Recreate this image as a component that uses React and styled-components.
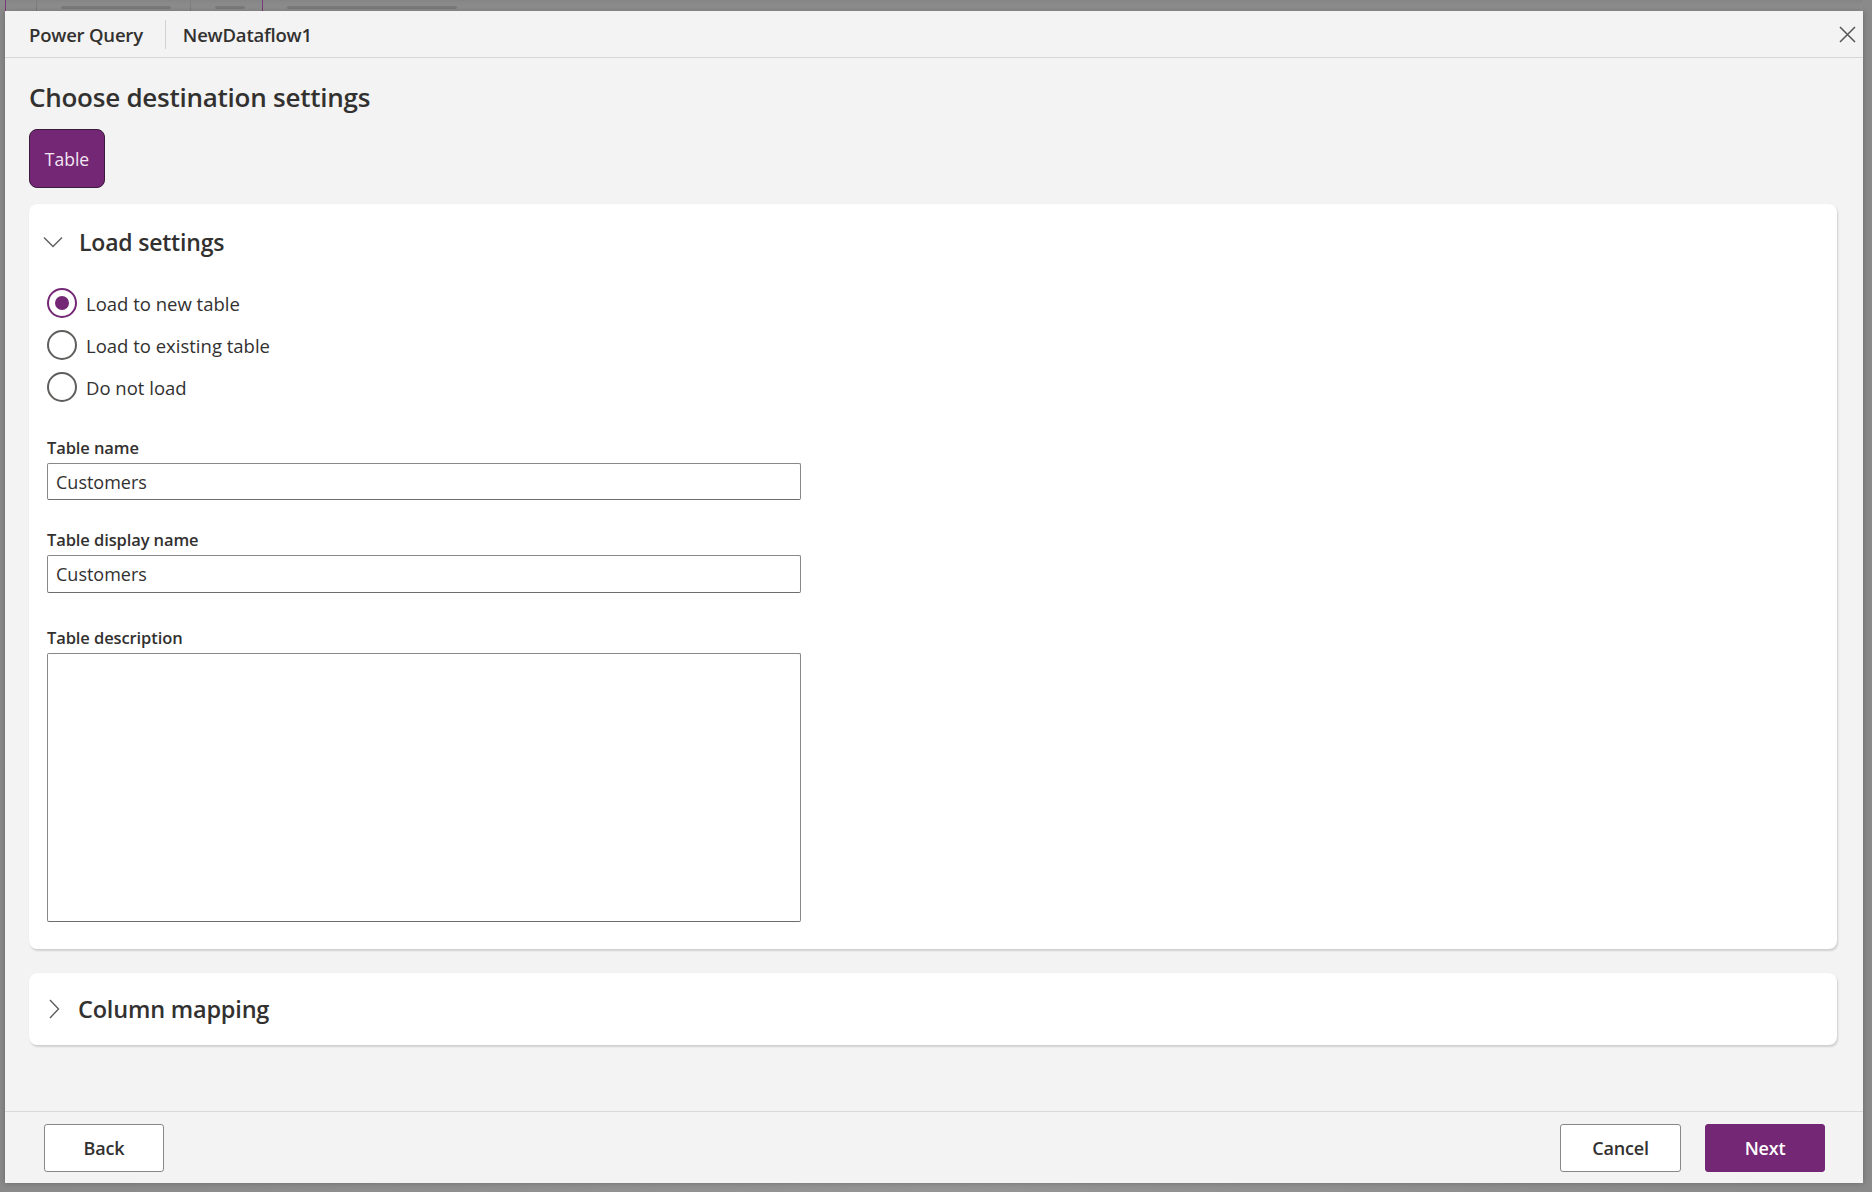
import React from "react";
import styled, {createGlobalStyle, css} from "styled-components";

const GlobalStyle = createGlobalStyle`
    html, body {
        margin: 0;
        padding: 0;
        background: #8e8e8e;
    }
    * {
        box-sizing: border-box;
    }
`;

const PURPLE = "#742774";
const TEXT = "#323130";
const FONT = `"Open Sans", "Noto Sans", "Liberation Sans", sans-serif`;

const Page = styled.div`
    width: 1872px;
    height: 1192px;
    display: flex;
    flex-direction: column;
    padding: 0 9px 9px 5px;
    font-family: ${FONT};
    color: ${TEXT};
    background: linear-gradient(to right, #8a8a8a, #959595 50%, #8a8a8a);
    overflow: hidden;
`;

// edge of the app tab strip that peeks out above the dialog
const BackdropTabs = styled.div`
    height: 11px;
    display: flex;
    flex-shrink: 0;
    background: linear-gradient(#858585, #939393);
`;

const BackdropTab = styled.div`
    width: ${props => props.width}px;
    border-left: 1px solid ${props => props.accent ? "#7b3b7b" : "#7e7e7e"};
    display: flex;
    align-items: flex-end;
    padding: 0 0 2px 24px;
`;

const BackdropSmudge = styled.div`
    width: ${props => props.width}px;
    height: 3px;
    border-radius: 2px;
    background: rgba(90, 90, 90, 0.35);
`;

const Dialog = styled.div`
    flex: 1;
    display: flex;
    flex-direction: column;
    background: #f3f3f3;
    box-shadow: 0 0 6px rgba(0, 0, 0, 0.25);
`;

const Header = styled.div`
    height: 47px;
    display: flex;
    align-items: center;
    padding: 0 4px 0 24px;
    border-bottom: 1px solid #d6d6d6;
    flex-shrink: 0;
`;

const HeaderTitle = styled.div`
    font-size: 18.5px;
    font-weight: 600;
    letter-spacing: -0.2px;
    color: ${TEXT};
`;

const HeaderDivider = styled.div`
    width: 1px;
    height: 29px;
    background: #d2d2d2;
    margin: 0 17px 0 22px;
`;

const CloseButton = styled.button`
    margin-left: auto;
    width: 24px;
    height: 24px;
    border: 0;
    background: none;
    padding: 0;
    display: flex;
    align-items: center;
    justify-content: center;
    color: #555;
`;

const Body = styled.div`
    flex: 1;
    padding: 0 26px 0 24px;
    display: flex;
    flex-direction: column;
`;

const Title = styled.h1`
    margin: 22px 0 0;
    font-size: 26px;
    line-height: 34px;
    font-weight: 600;
    letter-spacing: -0.25px;
    color: ${TEXT};
`;

const TypePill = styled.button`
    align-self: flex-start;
    margin-top: 15px;
    width: 76px;
    height: 59px;
    border-radius: 8px;
    border: 1px solid #3b1a3b;
    background: ${PURPLE};
    color: #f3e6f3;
    font-family: ${FONT};
    font-size: 17.5px;
    padding: 0;
`;

const Card = styled.section`
    background: #fff;
    border-radius: 8px;
    box-shadow: 1px 2px 2px rgba(0, 0, 0, 0.14), 0 0 1px rgba(0, 0, 0, 0.08);
    margin-top: ${props => props.gap}px;
    ${props => props.open && css`
        padding: 0 18px 27px 18px;
    `}
    ${props => !props.open && css`
        padding: 0 18px;
    `}
`;

const CardHeader = styled.div`
    height: ${props => props.height}px;
    display: flex;
    align-items: center;
    gap: ${props => props.gap}px;
    margin-left: ${props => props.indent}px;
`;

const CardTitle = styled.h2`
    margin: 0;
    font-size: ${props => props.size}px;
    font-weight: 600;
    letter-spacing: -0.2px;
    color: ${TEXT};
`;

const RadioGroup = styled.div`
    margin-top: 3px;
    display: flex;
    flex-direction: column;
`;

const RadioRow = styled.label`
    height: 42px;
    display: flex;
    align-items: center;
    gap: 9px;
    font-size: 18.5px;
    color: ${TEXT};
`;

const RadioCircle = styled.span`
    width: 30px;
    height: 30px;
    border-radius: 50%;
    border: 2px solid ${props => props.checked ? PURPLE : "#605e5c"};
    display: flex;
    align-items: center;
    justify-content: center;
    flex-shrink: 0;
    ${props => props.checked && css`
        &::after {
            content: "";
            width: 14px;
            height: 14px;
            border-radius: 50%;
            background: ${PURPLE};
        }
    `}
`;

const Field = styled.div`
    margin-top: ${props => props.gap}px;
    width: 754px;
    display: flex;
    flex-direction: column;
`;

const FieldLabel = styled.label`
    font-size: 16.5px;
    line-height: 22px;
    font-weight: 600;
    letter-spacing: -0.1px;
    color: ${TEXT};
    margin-bottom: 4px;
`;

const TextInput = styled.input`
    height: ${props => props.h}px;
    border: 1px solid #8a8886;
    border-bottom-color: #6e6d6b;
    border-radius: 2px;
    padding: 0 8px;
    font-family: ${FONT};
    font-size: 18px;
    color: ${TEXT};
    background: #fff;
    outline: none;
`;

const TextArea = styled.textarea`
    display: block;
    height: 269px;
    border: 1px solid #8a8886;
    border-bottom-color: #6e6d6b;
    border-radius: 2px;
    resize: none;
    font-family: ${FONT};
    background: #fff;
    outline: none;
`;

const Footer = styled.div`
    flex-shrink: 0;
    border-top: 1px solid #dadada;
    padding: 12px 38px 11px 39px;
    display: flex;
    gap: 24px;
`;

const FooterButton = styled.button`
    width: ${props => props.width}px;
    height: 48px;
    border-radius: 3px;
    font-family: ${FONT};
    font-size: 18px;
    font-weight: 600;
    letter-spacing: -0.2px;
    ${props => props.primary ? css`
        background: ${PURPLE};
        border: 1px solid ${PURPLE};
        color: #fff;
    ` : css`
        background: #fff;
        border: 1px solid #8a8886;
        color: ${TEXT};
    `}
    ${props => props.push && css`
        margin-left: auto;
    `}
`;

function ChevronDown() {
    return (
        <svg width="20" height="12" viewBox="0 0 20 12" fill="none">
            <path d="M1 1.5 L10 10.5 L19 1.5" stroke="#605e5c" strokeWidth="1.4"/>
        </svg>
    );
}

function ChevronRight() {
    return (
        <svg width="12" height="20" viewBox="0 0 12 20" fill="none">
            <path d="M2 1 L10.5 10 L2 19" stroke="#605e5c" strokeWidth="1.4"/>
        </svg>
    );
}

function CloseIcon() {
    return (
        <svg width="17" height="17" viewBox="0 0 17 17" fill="none">
            <path d="M1 1 L16 16 M16 1 L1 16" stroke="#555" strokeWidth="1.5"/>
        </svg>
    );
}

const loadOptions = [
    {label: "Load to new table", checked: true},
    {label: "Load to existing table"},
    {label: "Do not load"},
];

export default function App() {
    return (
        <Page>
            <GlobalStyle/>
            <BackdropTabs>
                <BackdropTab width={31} accent/>
                <BackdropTab width={154}><BackdropSmudge width={110}/></BackdropTab>
                <BackdropTab width={72}><BackdropSmudge width={30}/></BackdropTab>
                <BackdropTab width={400} accent><BackdropSmudge width={170}/></BackdropTab>
            </BackdropTabs>
            <Dialog>
                <Header>
                    <HeaderTitle>Power Query</HeaderTitle>
                    <HeaderDivider/>
                    <HeaderTitle>NewDataflow1</HeaderTitle>
                    <CloseButton aria-label="Close"><CloseIcon/></CloseButton>
                </Header>
                <Body>
                    <Title>Choose destination settings</Title>
                    <TypePill>Table</TypePill>

                    <Card open gap={16}>
                        <CardHeader height={75} gap={16} indent={-4}>
                            <ChevronDown/>
                            <CardTitle size={23}>Load settings</CardTitle>
                        </CardHeader>
                        <RadioGroup>
                            {loadOptions.map(opt => (
                                <RadioRow key={opt.label}>
                                    <RadioCircle checked={opt.checked}/>
                                    {opt.label}
                                </RadioRow>
                            ))}
                        </RadioGroup>
                        <Field gap={29}>
                            <FieldLabel>Table name</FieldLabel>
                            <TextInput h={37} defaultValue="Customers"/>
                        </Field>
                        <Field gap={29}>
                            <FieldLabel>Table display name</FieldLabel>
                            <TextInput h={38} defaultValue="Customers"/>
                        </Field>
                        <Field gap={34}>
                            <FieldLabel>Table description</FieldLabel>
                            <TextArea/>
                        </Field>
                    </Card>

                    <Card gap={24}>
                        <CardHeader height={72} gap={18} indent={1}>
                            <ChevronRight/>
                            <CardTitle size={23.5}>Column mapping</CardTitle>
                        </CardHeader>
                    </Card>
                </Body>
                <Footer>
                    <FooterButton width={120}>Back</FooterButton>
                    <FooterButton width={121} push>Cancel</FooterButton>
                    <FooterButton width={120} primary>Next</FooterButton>
                </Footer>
            </Dialog>
        </Page>
    );
}
